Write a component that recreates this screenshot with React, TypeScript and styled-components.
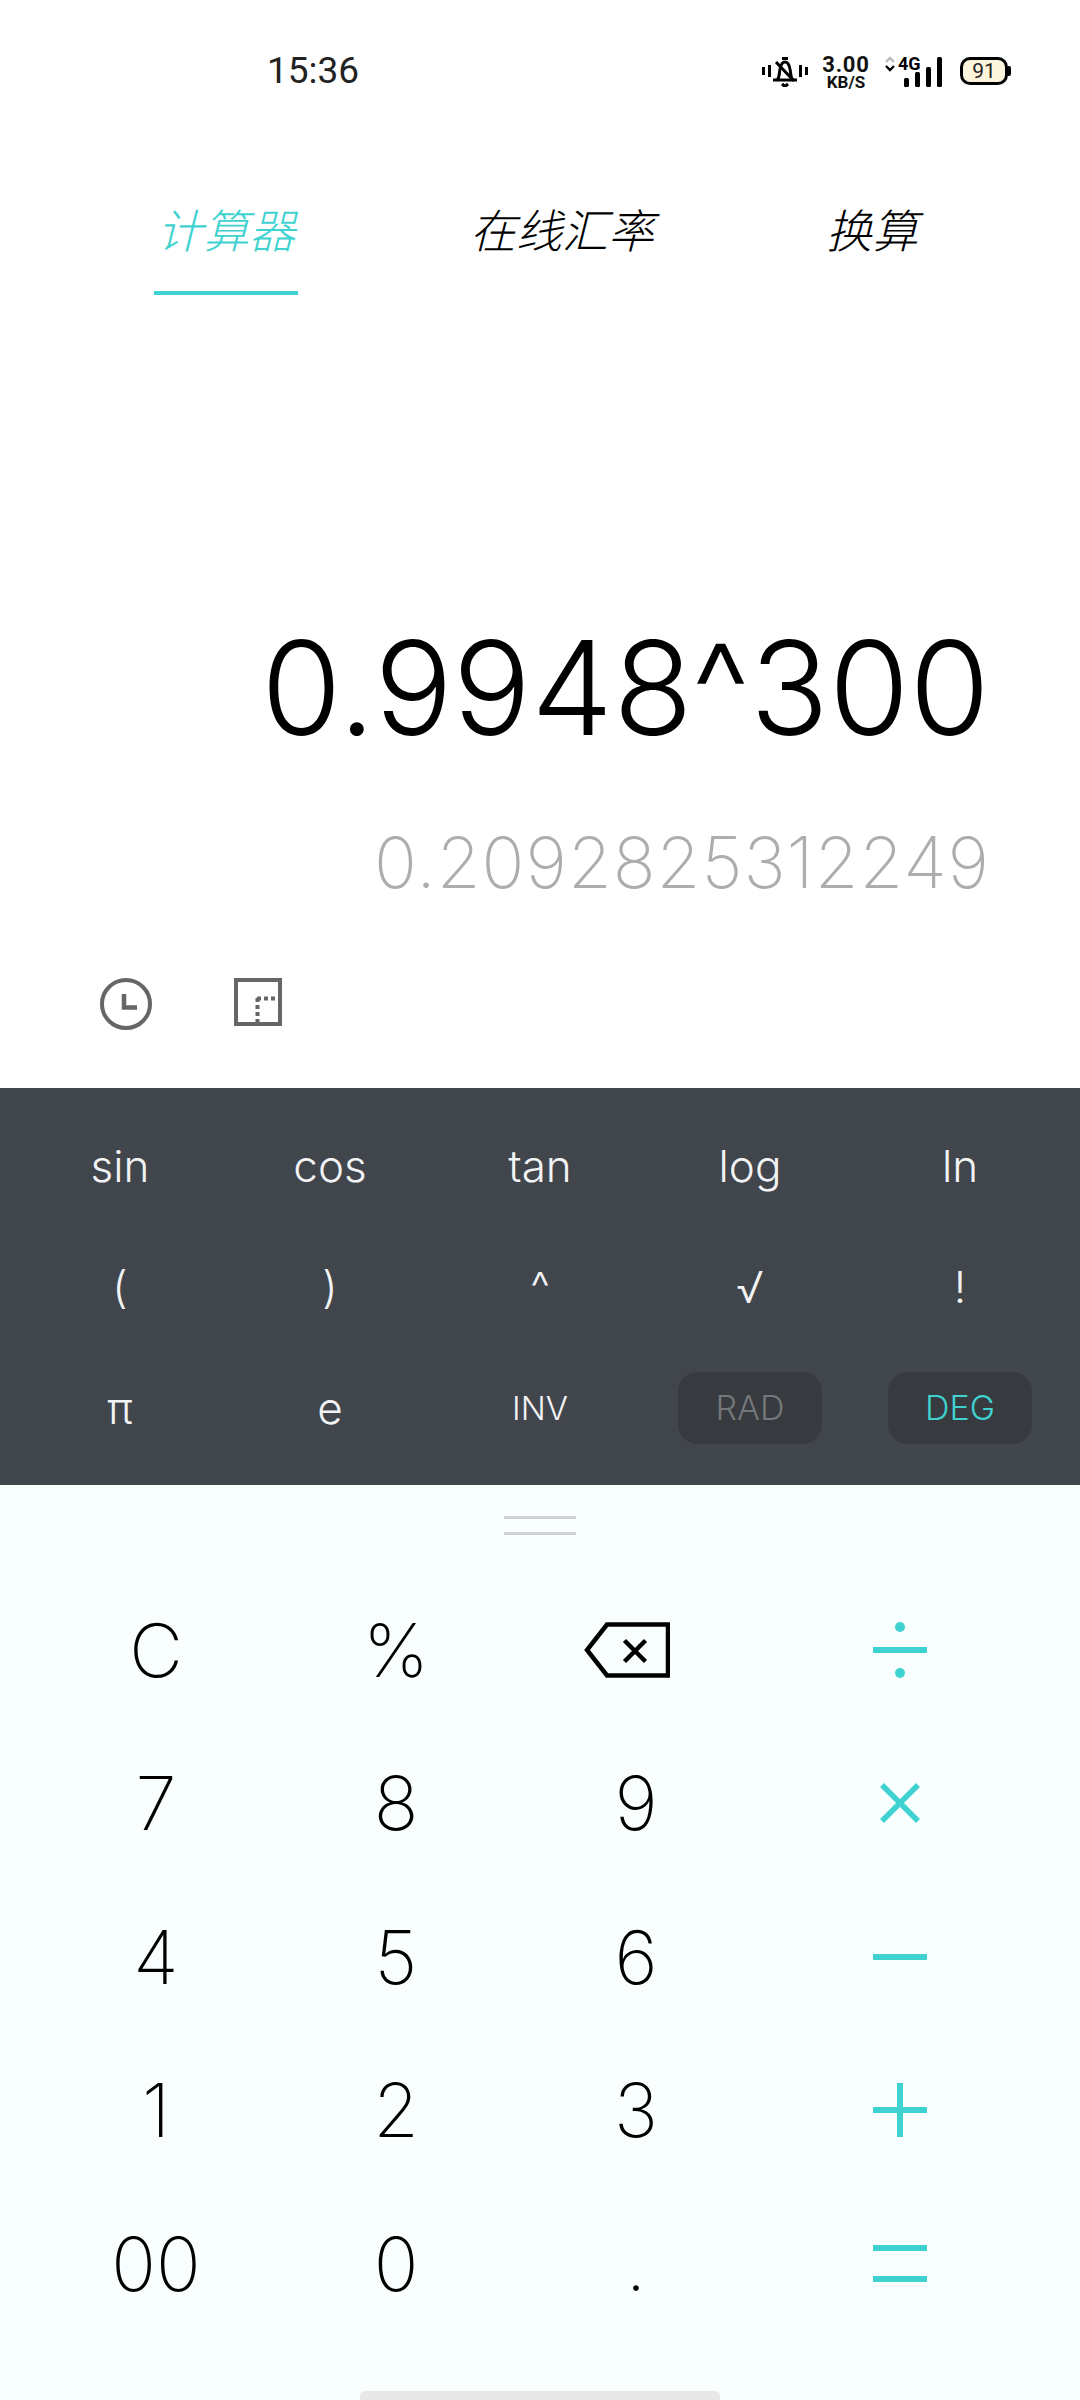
import styled, { createGlobalStyle } from "styled-components"

const TEAL = "#3fd2d0"

const Globalstyle = createGlobalStyle`
  html, body {
    margin: 0;
    padding: 0;
    background: #fff;
  }
  * {
    box-sizing: border-box;
  }
`

const sciRows = [
  ["sin", "cos", "tan", "log", "ln"],
  ["(", ")", "^", "√", "!"],
]

const padRows = [
  ["7", "8", "9"],
  ["4", "5", "6"],
  ["1", "2", "3"],
  ["00", "0", "."],
]

const BellIcon = () => (
  <svg width="46" height="31" viewBox="0 0 46 31" fill="none" stroke="#000" strokeWidth="3">
    <path d="M1.5 11v8M7.5 9v12M38.5 9v12M44.5 11v8" />
    <path d="M11 24h24M15 24c3-3 2-7 3-11 1-5 3-7 5-7s4 2 5 7c1 4 0 8 3 11" />
    <path d="M14 6l18 19" />
    <path d="M20 2.5h6M20 28l3 2.5 3-2.5" />
  </svg>
)

const SignalIcon = () => (
  <svg width="38" height="30" viewBox="0 0 38 30" fill="#000">
    <rect x="0" y="21" width="5" height="9" rx="1.5" />
    <rect x="11" y="15" width="5" height="15" rx="1.5" />
    <rect x="22" y="10" width="5" height="20" rx="1.5" />
    <rect x="33" y="0" width="5" height="30" rx="1.5" />
  </svg>
)

const ArrowsIcon = () => (
  <svg width="10" height="16" viewBox="0 0 10 16" fill="none" strokeWidth="2.4">
    <path d="M1 6l4-4 4 4" stroke="#bbb" />
    <path d="M1 10l4 4 4-4" stroke="#000" />
  </svg>
)

const ClockIcon = () => (
  <svg width="52" height="52" viewBox="0 0 52 52" fill="none" stroke="#666" strokeWidth="4">
    <circle cx="26" cy="26" r="24" />
    <path d="M24 16v13.500h13" strokeWidth="4.500" />
  </svg>
)

const RatioIcon = () => (
  <svg width="48" height="48" viewBox="0 0 48 48" fill="none" stroke="#666">
    <rect x="2" y="2" width="44" height="44" strokeWidth="4" />
    <path d="M23 20.500h25M23.500 20v26" strokeWidth="4" strokeDasharray="4 3" />
  </svg>
)

const BackspaceIcon = () => (
  <svg width="86" height="56" viewBox="0 0 86 56" fill="none" stroke="#000" strokeWidth="4.500">
    <path d="M23 2.500h61v51H23L3 28z" />
    <path d="M40.500 18.500l21 21M61.500 18.500l-21 21" />
  </svg>
)

const DivideIcon = () => (
  <svg width="54" height="56" viewBox="0 0 54 56" fill={TEAL}>
    <circle cx="27" cy="5" r="5" />
    <rect x="0" y="25" width="54" height="6" />
    <circle cx="27" cy="51" r="5" />
  </svg>
)

const TimesIcon = () => (
  <svg width="42" height="42" viewBox="0 0 42 42" fill="none" stroke={TEAL} strokeWidth="5.500">
    <path d="M3 3l36 36M39 3L3 39" />
  </svg>
)

const MinusIcon = () => (
  <svg width="54" height="6" viewBox="0 0 54 6" fill={TEAL}>
    <rect width="54" height="6" />
  </svg>
)

const PlusIcon = () => (
  <svg width="54" height="54" viewBox="0 0 54 54" fill={TEAL}>
    <rect x="0" y="24" width="54" height="6" />
    <rect x="24" y="0" width="6" height="54" />
  </svg>
)

const EqualsIcon = () => (
  <svg width="54" height="37" viewBox="0 0 54 37" fill={TEAL}>
    <rect width="54" height="6" />
    <rect y="31" width="54" height="6" />
  </svg>
)

const opIcons = [<TimesIcon />, <MinusIcon />, <PlusIcon />, <EqualsIcon />]

function App() {
  return (
    <Page>
      <Globalstyle />
      <StatusBar>
        <Clock>15:36</Clock>
        <StatusIcons>
          <BellIcon />
          <Speed>
            <SpeedValue>3.00</SpeedValue>
            <SpeedUnit>KB/S</SpeedUnit>
          </Speed>
          <Network>
            <NetworkTop>
              <ArrowsIcon />
              <NetworkLabel>4G</NetworkLabel>
            </NetworkTop>
            <SignalIcon />
          </Network>
          <Battery>91</Battery>
        </StatusIcons>
      </StatusBar>

      <Tabs>
        <Tab $active>计算器</Tab>
        <Tab>在线汇率</Tab>
        <Tab>换算</Tab>
      </Tabs>

      <Display>
        <Expression>0.9948^300</Expression>
        <Result>0.2092825312249</Result>
      </Display>

      <Tools>
        <ClockIcon />
        <RatioIcon />
      </Tools>

      <SciPanel>
        {sciRows.flat().map((key) => (
          <SciKey key={key}>{key}</SciKey>
        ))}
        <SciKey>π</SciKey>
        <SciKey>e</SciKey>
        <SciKey $small>INV</SciKey>
        <SciKey>
          <Mode>RAD</Mode>
        </SciKey>
        <SciKey>
          <Mode $on>DEG</Mode>
        </SciKey>
      </SciPanel>

      <PadPanel>
        <Handle />
        <PadGrid>
          <PadKey>C</PadKey>
          <PadKey>%</PadKey>
          <PadKey $nudge={18}>
            <BackspaceIcon />
          </PadKey>
          <PadKey>
            <DivideIcon />
          </PadKey>
          {padRows.map((row, i) => (
            <PadRow key={i}>
              {row.map((key) => (
                <PadKey key={key}>{key}</PadKey>
              ))}
              <PadKey>{opIcons[i]}</PadKey>
            </PadRow>
          ))}
        </PadGrid>
        <HomeBar />
      </PadPanel>
    </Page>
  )
}

export default App

const Page = styled.div`
  width: 1080px;
  height: 2400px;
  display: flex;
  flex-direction: column;
  overflow: hidden;
  font-family: Inter, Roboto, sans-serif;
  background: #fff;
`

const StatusBar = styled.div`
  height: 140px;
  display: flex;
  justify-content: space-between;
  align-items: flex-start;
  padding: 50px 72px 0 267px;
  font-family: Roboto, sans-serif;
`

const Clock = styled.div`
  font-size: 37px;
  line-height: 42px;
  color: #222;
`

const StatusIcons = styled.div`
  display: flex;
  align-items: center;
  height: 40px;
  margin-top: 1px;
`

const Speed = styled.div`
  margin-left: 14px;
  width: 48px;
  display: flex;
  flex-direction: column;
  align-items: center;
  color: #111;
`

const SpeedValue = styled.span`
  font-size: 22px;
  line-height: 21px;
  font-weight: 700;
  letter-spacing: 0.8px;
`

const SpeedUnit = styled.span`
  font-size: 17px;
  line-height: 14px;
  font-weight: 700;
`

const Network = styled.div`
  margin-left: 15px;
  width: 57px;
  height: 31px;
  position: relative;
  display: flex;
  justify-content: flex-end;
  align-items: flex-end;
`

const NetworkTop = styled.div`
  position: absolute;
  left: 0;
  top: 0;
  display: flex;
  align-items: center;
  gap: 3px;
`

const NetworkLabel = styled.span`
  font-size: 18px;
  line-height: 16px;
  font-weight: 700;
`

const Battery = styled.div`
  margin-left: 18px;
  width: 48px;
  height: 28px;
  border: 3px solid #000;
  border-radius: 10px;
  background: #fdf4dc;
  font-size: 21px;
  line-height: 22px;
  text-align: center;
  color: #222;
  position: relative;

  &::after {
    content: "";
    position: absolute;
    right: -6px;
    top: 6px;
    width: 3px;
    height: 10px;
    background: #000;
    border-radius: 0 2px 2px 0;
  }
`

const Tabs = styled.div`
  height: 154px;
  display: flex;
  gap: 172px;
  padding: 57px 0 0 154px;
`

const Tab = styled.div<{ $active?: boolean }>`
  height: 98px;
  padding: 0 ${(p) => (p.$active ? "3px" : "0")} 26px;
  font-family: "Noto Sans CJK SC", sans-serif;
  font-size: 46px;
  line-height: 62px;
  font-weight: 300;
  font-style: italic;
  color: ${(p) => (p.$active ? TEAL : "#000")};
  border-bottom: ${(p) => (p.$active ? `4px solid ${TEAL}` : "none")};
`

const Display = styled.div`
  height: 684px;
  display: flex;
  flex-direction: column;
  align-items: flex-end;
  padding: 314px 90px 0 0;
`

const Expression = styled.div`
  font-size: 130px;
  line-height: 160px;
  font-weight: 300;
  color: #000;
  letter-spacing: 0.2px;
`

const Result = styled.div`
  margin-top: 50px;
  font-size: 71px;
  line-height: 88px;
  font-weight: 250;
  color: #adadad;
  letter-spacing: 1px;
`

const Tools = styled.div`
  height: 110px;
  display: flex;
  align-items: flex-start;
  gap: 82px;
  padding-left: 100px;
`

const SciPanel = styled.div`
  height: 397px;
  background: #41454c;
  padding: 17px 15px 0;
  display: grid;
  grid-template-columns: repeat(5, 210px);
  grid-auto-rows: 121px;
`

const SciKey = styled.div<{ $small?: boolean }>`
  display: flex;
  align-items: center;
  justify-content: center;
  color: #f2f3f4;
  font-size: ${(p) => (p.$small ? "33px" : "44px")};
  font-weight: 300;
`

const Mode = styled.div<{ $on?: boolean }>`
  width: 144px;
  height: 72px;
  border-radius: 20px;
  background: #373a3e;
  display: flex;
  align-items: center;
  justify-content: center;
  font-size: 34px;
  color: ${(p) => (p.$on ? TEAL : "#74777b")};
`

const PadPanel = styled.div`
  flex: 1;
  background: #f9fffe;
  display: flex;
  flex-direction: column;
`

const Handle = styled.div`
  height: 88px;
  margin: 0 auto;
  width: 72px;
  padding-top: 31px;

  &::before {
    content: "";
    display: block;
    height: 13px;
    border-top: 3px solid #ced2d4;
    border-bottom: 3px solid #ced2d4;
  }
`

const PadGrid = styled.div`
  display: grid;
  grid-template-columns: 240px 240px 240px 288px;
  grid-auto-rows: 153.5px;
  padding: 0 36px;
`

const PadRow = styled.div`
  display: contents;
`

const PadKey = styled.div<{ $nudge?: number }>`
  display: flex;
  align-items: center;
  justify-content: center;
  padding-right: ${(p) => p.$nudge ?? 0}px;
  font-size: 74px;
  font-weight: 250;
  color: #000;
`

const HomeBar = styled.div`
  width: 360px;
  height: 9px;
  margin: auto auto 0;
  border-radius: 5px 5px 0 0;
  background: #e8e8e8;
`
